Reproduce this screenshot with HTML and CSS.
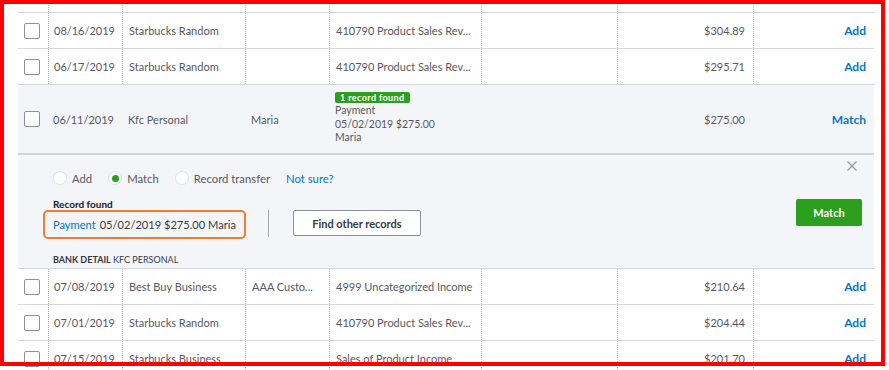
FILE: index.html
```html
<!DOCTYPE html>
<html lang="en">
<head>
  <meta charset="UTF-8" />
  <title>Bank transactions</title>
  <link rel="stylesheet" href="styles.css">
</head>
<body>
  <div class="screen">
    <div class="register">

      <div class="row row-cut">
        <div class="cell"></div><div class="cell"></div><div class="cell"></div><div class="cell"></div>
        <div class="cell"></div><div class="cell"></div><div class="cell"></div><div class="cell"></div>
      </div>

      <div class="row">
        <div class="cell cell-check"><span class="box"></span></div>
        <div class="cell cell-date">08/16/2019</div>
        <div class="cell">Starbucks Random</div>
        <div class="cell"></div>
        <div class="cell">410790 Product Sales Rev...</div>
        <div class="cell"></div>
        <div class="cell cell-amount">$304.89</div>
        <div class="cell cell-action"><a href="#">Add</a></div>
      </div>

      <div class="row">
        <div class="cell cell-check"><span class="box"></span></div>
        <div class="cell cell-date">06/17/2019</div>
        <div class="cell">Starbucks Random</div>
        <div class="cell"></div>
        <div class="cell">410790 Product Sales Rev...</div>
        <div class="cell"></div>
        <div class="cell cell-amount">$295.71</div>
        <div class="cell cell-action"><a href="#">Add</a></div>
      </div>

      <div class="row row-open">
        <div class="cell cell-check"><span class="box"></span></div>
        <div class="cell cell-date">06/11/2019</div>
        <div class="cell">Kfc Personal</div>
        <div class="cell">Maria</div>
        <div class="cell cell-match">
          <span class="badge">1 record found</span>
          <span>Payment</span>
          <span>05/02/2019 $275.00</span>
          <span>Maria</span>
        </div>
        <div class="cell"></div>
        <div class="cell cell-amount">$275.00</div>
        <div class="cell cell-action"><a href="#">Match</a></div>
      </div>

      <!-- expanded detail for the open row -->
      <div class="panel">
        <div class="panel-top">
          <div class="choices">
            <label class="choice"><span class="radio"></span>Add</label>
            <label class="choice"><span class="radio radio-on"></span>Match</label>
            <label class="choice"><span class="radio"></span>Record transfer</label>
            <a href="#" class="hint">Not sure?</a>
          </div>
          <svg class="close" width="10" height="10" viewBox="0 0 10 10">
            <path d="M0.5 0.5 L9.5 9.5 M9.5 0.5 L0.5 9.5" stroke="#9a9ca1" stroke-width="1.4" fill="none"/>
          </svg>
        </div>

        <div class="found">
          <div class="found-left">
            <div class="found-title">Record found</div>
            <div class="found-row">
              <div class="found-record"><a href="#">Payment</a> 05/02/2019 $275.00 Maria</div>
              <span class="divider"></span>
              <button class="btn-outline">Find other records</button>
            </div>
          </div>
          <button class="btn-green">Match</button>
        </div>

        <div class="bank-detail"><b>BANK DETAIL</b> KFC PERSONAL</div>
      </div>

      <div class="row">
        <div class="cell cell-check"><span class="box"></span></div>
        <div class="cell cell-date">07/08/2019</div>
        <div class="cell">Best Buy Business</div>
        <div class="cell">AAA Custo...</div>
        <div class="cell">4999 Uncategorized Income</div>
        <div class="cell"></div>
        <div class="cell cell-amount">$210.64</div>
        <div class="cell cell-action"><a href="#">Add</a></div>
      </div>

      <div class="row">
        <div class="cell cell-check"><span class="box"></span></div>
        <div class="cell cell-date">07/01/2019</div>
        <div class="cell">Starbucks Random</div>
        <div class="cell"></div>
        <div class="cell">410790 Product Sales Rev...</div>
        <div class="cell"></div>
        <div class="cell cell-amount">$204.44</div>
        <div class="cell cell-action"><a href="#">Add</a></div>
      </div>

      <div class="row">
        <div class="cell cell-check"><span class="box"></span></div>
        <div class="cell cell-date">07/15/2019</div>
        <div class="cell">Starbucks Business</div>
        <div class="cell"></div>
        <div class="cell">Sales of Product Income</div>
        <div class="cell"></div>
        <div class="cell cell-amount">$201.70</div>
        <div class="cell cell-action"><a href="#">Add</a></div>
      </div>

    </div>

    <!-- red annotation frame -->
    <div class="frame"></div>
  </div>
</body>
</html>
```

FILE: styles.css
```css
* {
  box-sizing: border-box;
}

body {
  margin: 0;
  background: #fff;
  font-family: Lato, "Open Sans", sans-serif;
  font-size: 11px;
  color: #58595e;
}

a {
  color: #0077c5;
  text-decoration: none;
}

.screen {
  position: relative;
  width: 889px;
  height: 370px;
  overflow: hidden;
}

.register {
  margin-left: 18px;
  width: 856px;
}

/* Rows */
.row {
  display: grid;
  grid-template-columns: 30px 74px 123px 84px 152px 136px 136px 121px;
  height: 36px;
  border-bottom: 1px solid #d4d7dc;
}

.row-cut {
  height: 13px;
}

.cell {
  display: flex;
  align-items: center;
  padding: 0 6px;
  border-left: 1px dotted #b9bcc2;
  white-space: nowrap;
  overflow: hidden;
}

.cell:first-child {
  border-left: none;
}

.cell-date {
  padding-left: 5px;
}

.cell-amount {
  justify-content: flex-end;
  padding-right: 8px;
}

.cell-action {
  justify-content: flex-end;
  padding-right: 8px;
}

.cell-action a {
  font-weight: 700;
  font-size: 12px;
}

.box {
  width: 16px;
  height: 16px;
  border: 1px solid #8d9096;
  border-radius: 2px;
  background: #fff;
}

.row-open {
  height: 70px;
  background: #f4f5f8;
  border-bottom: 2px solid #d0d3d8;
}

.row-open .cell {
  border-left: none;
}

.cell-match {
  flex-direction: column;
  align-items: flex-start;
  justify-content: flex-start;
  padding-top: 7px;
  font-size: 10.5px;
  line-height: 13.5px;
}

.badge {
  background: #2ca01c;
  color: #fff;
  font-size: 9px;
  font-weight: 700;
  letter-spacing: 0.4px;
  line-height: 11px;
  padding: 0 5px;
  border-radius: 2px;
  margin-bottom: 1px;
}

/* Expanded panel */
.panel {
  height: 114px;
  background: #f4f5f8;
  border-bottom: 1px solid #d4d7dc;
  padding: 6px 12px 0 35px;
}

.panel-top {
  display: flex;
  justify-content: space-between;
  align-items: flex-start;
}

.choices {
  display: flex;
  align-items: center;
  margin-top: 10px;
  height: 14px;
  font-size: 11.3px;
}

.choice {
  display: flex;
  align-items: center;
  margin-right: 16px;
}

.radio {
  width: 14px;
  height: 14px;
  border-radius: 50%;
  background: #fff;
  border: 1px solid #e0e1e4;
  margin-right: 5px;
  display: flex;
  align-items: center;
  justify-content: center;
}

.radio-on::after {
  content: "";
  width: 7px;
  height: 7px;
  border-radius: 50%;
  background: #2ca01c;
}

.close {
  margin-right: 5px;
}

.found {
  display: flex;
  justify-content: space-between;
  align-items: flex-start;
  margin-top: 13px;
}

.found-title {
  font-size: 10px;
  font-weight: 700;
  line-height: 12px;
  color: #1a1a1a;
}

.found-row {
  display: flex;
  align-items: flex-start;
}

.found-record {
  margin-left: -10px;
  height: 29px;
  padding: 0 8px;
  border: 2px solid #ee7d2f;
  border-radius: 5px;
  display: flex;
  align-items: center;
  gap: 4px;
  font-size: 11.1px;
  color: #393a3d;
  white-space: nowrap;
}

.divider {
  width: 1px;
  height: 27px;
  background: #a6a8ad;
  margin: 0 24px 0 22px;
}

.btn-outline {
  height: 26px;
  width: 128px;
  border: 1px solid #8d9096;
  border-radius: 2px;
  background: #fff;
  font-family: inherit;
  font-size: 11px;
  font-weight: 700;
  color: #393a3d;
  padding: 0;
}

.btn-green {
  margin-top: 1px;
  width: 66px;
  height: 27px;
  border: none;
  border-radius: 2px;
  background: #2ca01c;
  color: #fff;
  font-family: inherit;
  font-size: 11px;
  font-weight: 700;
  padding: 0;
}

.bank-detail {
  margin-top: 15px;
  font-size: 9px;
  line-height: 12px;
  color: #393a3d;
}

/* Annotation */
.frame {
  position: absolute;
  left: 0;
  top: 0;
  width: 885px;
  height: 366px;
  border: 4px solid #ff0000;
  pointer-events: none;
}
```
